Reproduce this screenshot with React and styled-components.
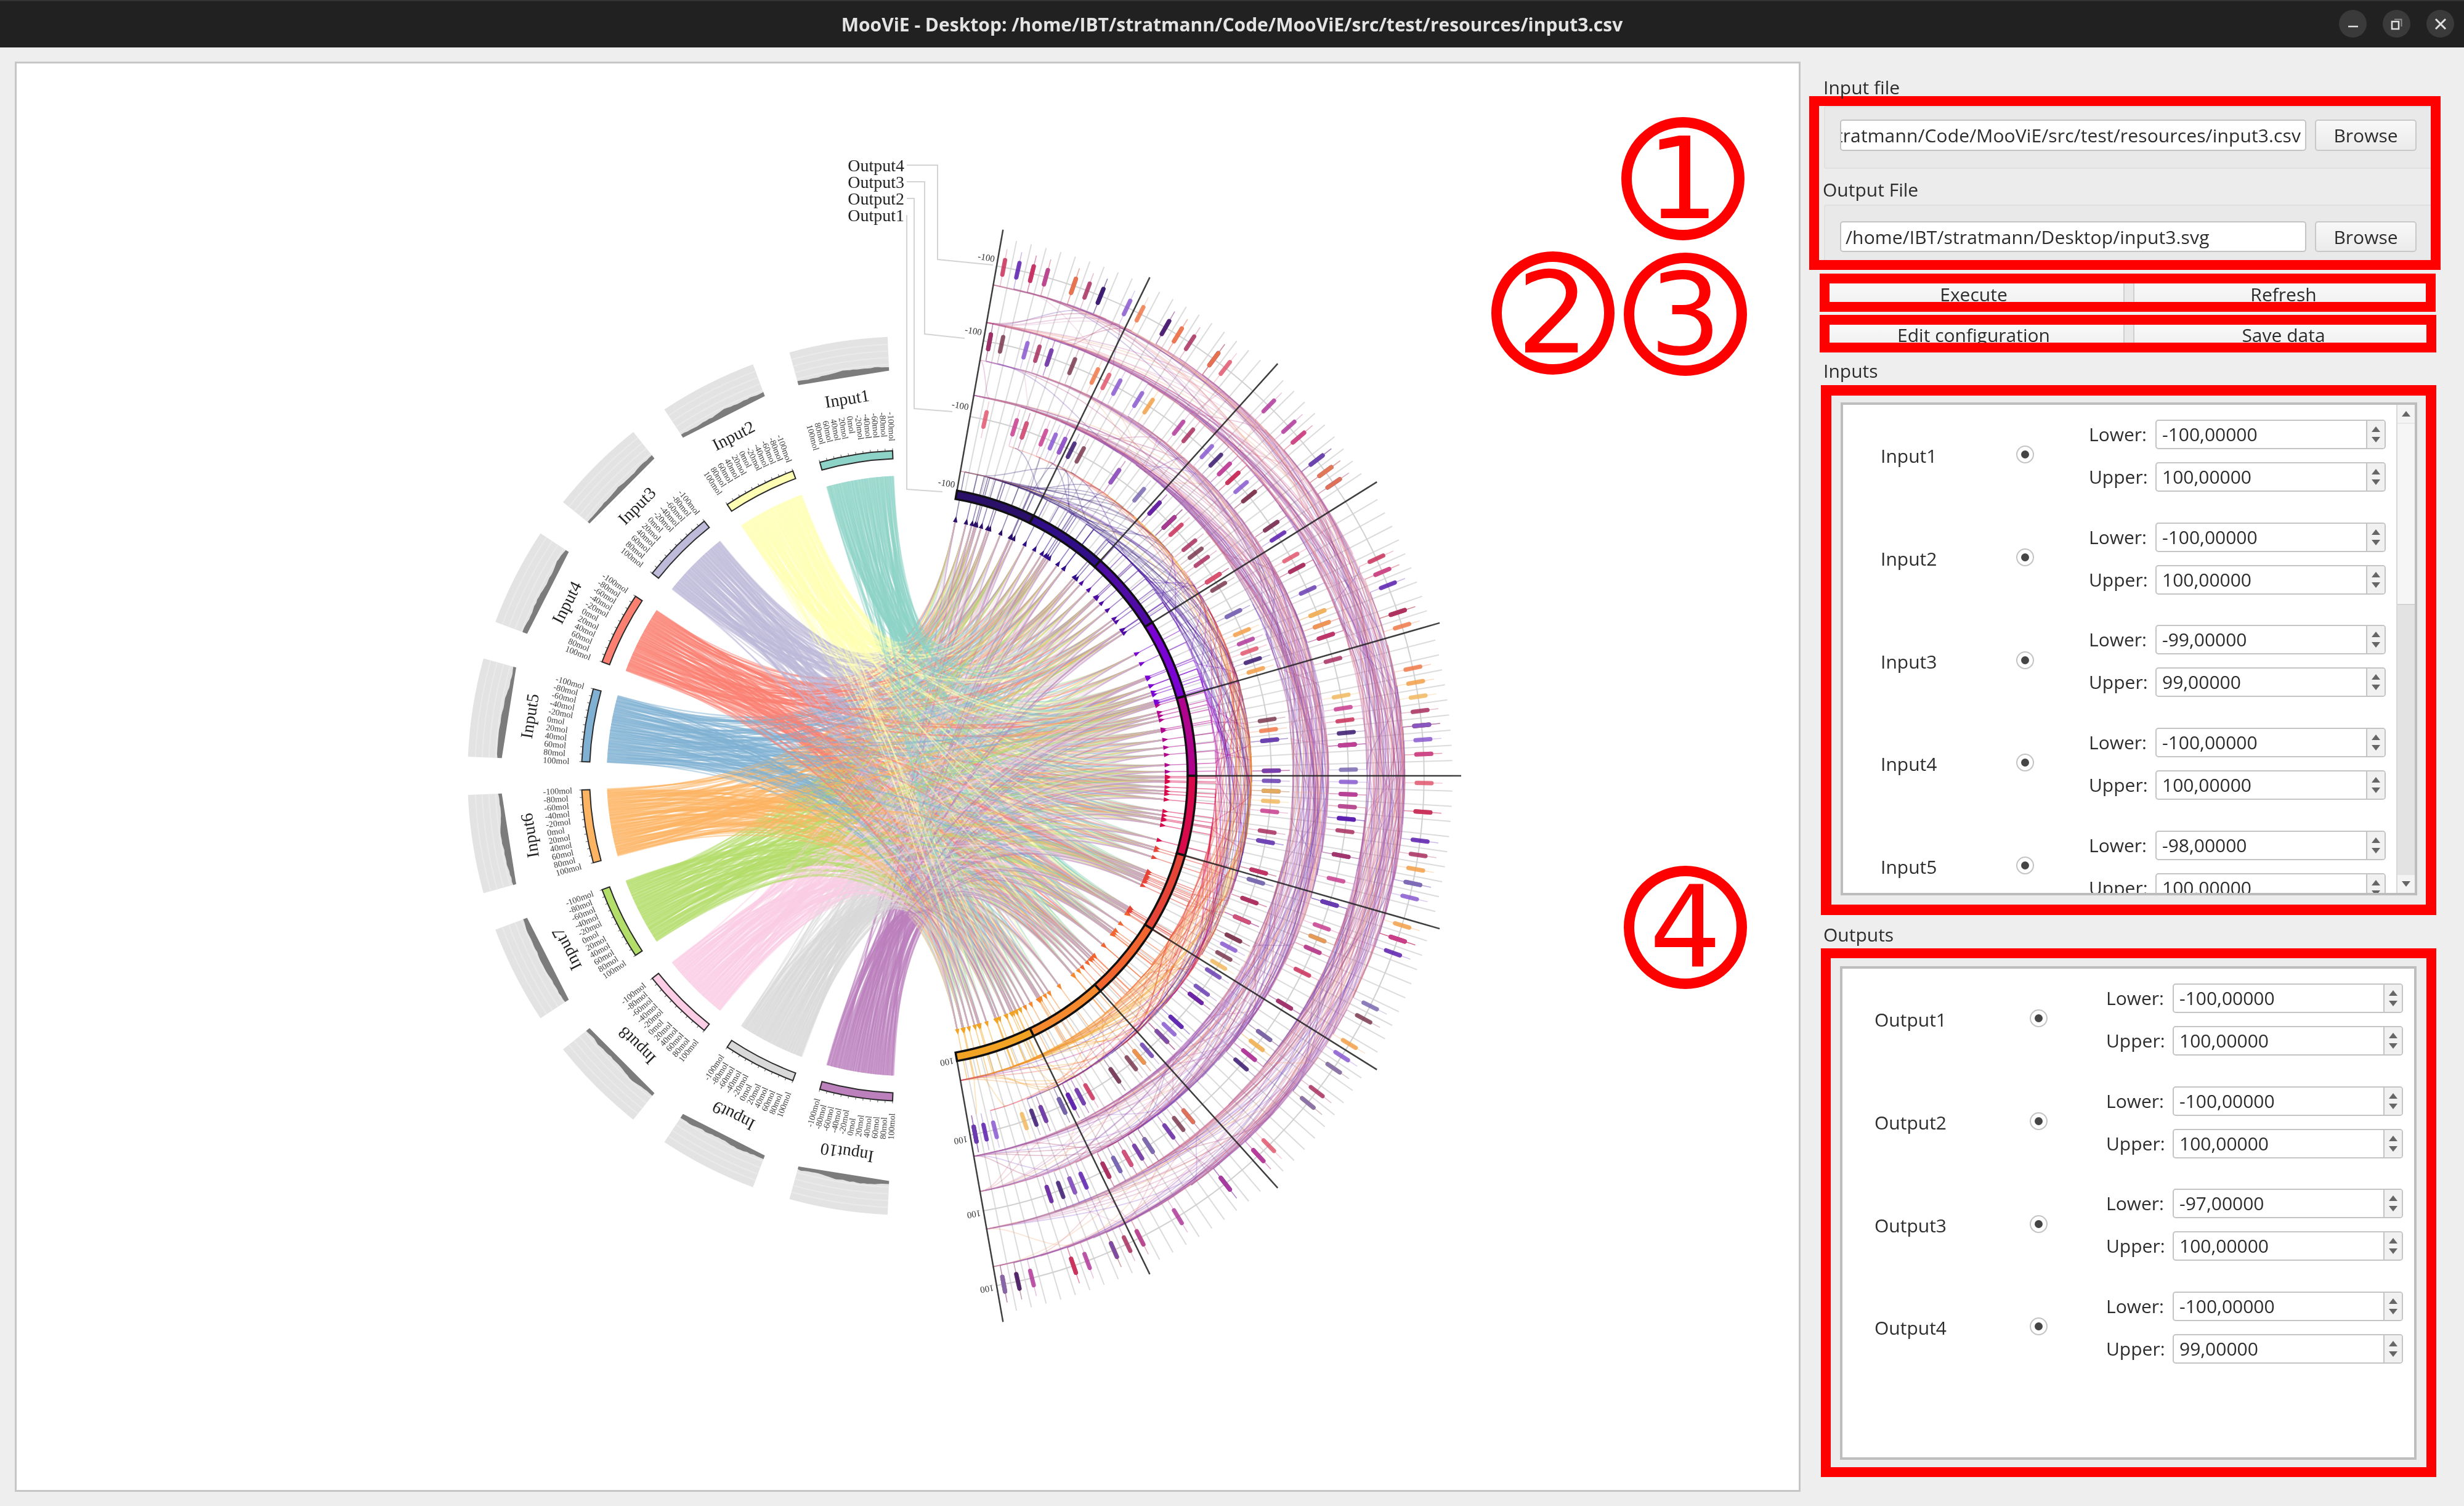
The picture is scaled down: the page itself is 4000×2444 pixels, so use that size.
import React from "react";
import styled, { createGlobalStyle } from "styled-components";

const Global = createGlobalStyle`
  html, body { margin: 0; padding: 0; background: #eeeeee; }
`;

const Root = styled.div`
  position: relative;
  width: 4000px;
  height: 2444px;
  overflow: hidden;
  background: #eeeeee;
  color: #2c2c2c;
  font-family: "Open Sans", "Noto Sans", sans-serif;
  font-size: 30px;
  filter: blur(0.7px);
`;

const TitleBar = styled.div`
  position: relative;
  height: 75px;
  background: #212121;
  border-top: 2px solid #333333;
  display: flex;
  align-items: center;
  justify-content: center;
`;

const WindowTitle = styled.div`
  color: #e4e4e4;
  font-weight: 700;
  font-size: 30px;
`;

const WindowButtons = styled.div`
  position: absolute;
  right: 16px;
  top: 14px;
  display: flex;
  gap: 26px;
`;

const WinButton = styled.div`
  width: 45px;
  height: 45px;
  border-radius: 50%;
  background: #3a3a3a;
  display: flex;
  align-items: center;
  justify-content: center;
`;

const Body = styled.div`
  display: flex;
  padding: 23px 0 0 24px;
`;

const CanvasPanel = styled.div`
  flex: none;
  box-sizing: border-box;
  width: 2899px;
  height: 2321px;
  background: #ffffff;
  border: 3px solid #c6c6c6;
`;

const ChartSvg = styled.svg`
  display: block;
  width: 2893px;
  height: 2315px;
`;

const Side = styled.div`
  flex: none;
  width: 1077px;
  padding-left: 14px;
  box-sizing: border-box;
`;

const SectionLabel = styled.div`
  display: flex;
  align-items: flex-end;
  box-sizing: border-box;
  height: ${(p) => p.$h}px;
  padding: 0 0 ${(p) => p.$pb}px 23px;
  line-height: 24px;
`;

const RedFrame = styled.div`
  box-sizing: border-box;
  margin-left: ${(p) => p.$ml}px;
  margin-top: ${(p) => p.$mt || 0}px;
  width: ${(p) => p.$w}px;
  height: ${(p) => p.$h}px;
  border: ${(p) => p.$b}px solid #ff0000;
  overflow: hidden;
  background: #ececec;
`;

const FileGroup = styled.div`
  box-sizing: border-box;
  height: ${(p) => p.$h}px;
  margin-left: 8px;
  width: 1010px;
  padding: ${(p) => p.$pt}px 0 0 24px;
  background: #e9e9e9;
  border: 2px solid #e0e0e0;
  border-radius: 4px;
`;

const FileRow = styled.div`
  display: flex;
  gap: 14px;
  width: 936px;
  height: ${(p) => p.$h}px;
`;

const LineEdit = styled.div`
  flex: 1;
  min-width: 0;
  box-sizing: border-box;
  display: flex;
  align-items: center;
  justify-content: ${(p) => (p.$clipStart ? "flex-end" : "flex-start")};
  padding: 0 7px;
  overflow: hidden;
  white-space: nowrap;
  background: #ffffff;
  border: 2px solid #c4c4c4;
  border-radius: 5px;
  letter-spacing: 0.12px;
  span { flex: none; }
`;

const BrowseButton = styled.div`
  flex: none;
  width: 165px;
  box-sizing: border-box;
  display: flex;
  align-items: center;
  justify-content: center;
  background: linear-gradient(#f8f8f8, #ebebeb);
  border: 2px solid #c8c8c8;
  border-radius: 5px;
`;

const FileLabel = styled.div`
  height: 58px;
  margin-left: 6px;
  line-height: 68px;
`;

const ActionRow = styled.div`
  display: grid;
  grid-template-columns: 490px 488px;
  column-gap: 14px;
  margin-left: -11px;
  height: 100%;
  background: #e8e8e8;
`;

const ActionButton = styled.div`
  text-align: center;
  line-height: ${(p) => p.$lh}px;
  background: linear-gradient(#f8f8f8, #f1f1f1);
  border: solid #cfcfcf;
  border-width: 0 2px;
`;

const ScrollFrame = styled.div`
  box-sizing: border-box;
  margin: ${(p) => p.$mt}px 0 0 15px;
  width: 936px;
  height: ${(p) => p.$h}px;
  border: 4px solid #bdbdbd;
  background: #ffffff;
  display: flex;
  overflow: hidden;
`;

const RowsView = styled.div`
  flex: 1;
  min-width: 0;
  margin-top: -1px;
`;

const ValueRow = styled.div`
  display: flex;
  align-items: center;
  height: 166.7px;
`;

const RowName = styled.div`
  flex: none;
  box-sizing: border-box;
  width: ${(p) => p.$w}px;
  padding-left: ${(p) => p.$pl}px;
  margin-top: 1px;
`;

const Radio = styled.div`
  flex: none;
  box-sizing: border-box;
  width: 29px;
  height: 29px;
  margin-top: -3px;
  border-radius: 50%;
  background: #ffffff;
  border: 2px solid #c4c4c4;
  display: flex;
  align-items: center;
  justify-content: center;
  &::after {
    content: "";
    width: 13px;
    height: 13px;
    border-radius: 50%;
    background: #454545;
  }
`;

const SpinGrid = styled.div`
  flex: none;
  margin-left: ${(p) => p.$ml}px;
  display: grid;
  grid-template-columns: 108px 374px;
  row-gap: 21px;
  align-items: center;
`;

const BoundLabel = styled.div`
  line-height: 48px;
`;

const Spin = styled.div`
  box-sizing: border-box;
  height: 48px;
  display: flex;
  background: #ffffff;
  border: 2px solid #c4c4c4;
  border-radius: 5px;
  overflow: hidden;
`;

const SpinValue = styled.div`
  flex: 1;
  padding-left: 9px;
  line-height: 44px;
`;

const Stepper = styled.div`
  flex: none;
  width: 28px;
  background: #f1f1f1;
  border-left: 2px solid #c4c4c4;
  display: flex;
  flex-direction: column;
  align-items: center;
  justify-content: center;
  gap: 8px;
`;

const StepArrow = styled.div`
  width: 0;
  height: 0;
  border-left: 7px solid transparent;
  border-right: 7px solid transparent;
  ${(p) => (p.$down ? "border-top: 9px solid #666666;" : "border-bottom: 9px solid #666666;")}
`;

const Scrollbar = styled.div`
  flex: none;
  width: 28px;
  display: flex;
  flex-direction: column;
  background: #e3e3e3;
  border-left: 2px solid #d8d8d8;
`;

const ScrollStep = styled.div`
  flex: none;
  height: 29px;
  background: #f4f4f4;
  display: flex;
  align-items: center;
  justify-content: center;
`;

const ScrollHandle = styled.div`
  flex: none;
  height: 296px;
  background: #f6f6f6;
  border-top: 2px solid #e8e8e8;
  border-bottom: 2px solid #d4d4d4;
  box-sizing: border-box;
`;

const ScrollTrack = styled.div`
  flex: 1;
`;

// the annotation numbers lie over the chart panel
const Marker = styled.div`
  position: absolute;
  left: ${(p) => p.$x - 100}px;
  top: ${(p) => p.$y - 100}px;
  box-sizing: border-box;
  width: 200px;
  height: 200px;
  border: 17px solid #ff0000;
  border-radius: 50%;
  display: flex;
  align-items: center;
  justify-content: center;
  color: #ff0000;
  font-family: "DejaVu Sans", sans-serif;
  font-size: 184px;
  line-height: 1;
`;

// chart geometry, all in page pixels
const CX = 1472;
const CY = 1259;
const INPUT_COLORS = ["#8dd3c7", "#ffffb3", "#bebada", "#fb8072", "#80b1d3", "#fdb462", "#b3de69", "#fccde5", "#d9d9d9", "#bc80bd"];
const SEG_COLORS = ["#2a1068", "#2f0e88", "#4e0ca4", "#7a02d2", "#b0048f", "#d80a4c", "#e64436", "#f2652f", "#f5892e", "#f2a324"];
const BAR_COLORS = ["#6a3fb0", "#8a5ad0", "#5a1fae", "#b03a9a", "#c8408f", "#c9305a", "#e05870", "#ef7a4a", "#f2a04a", "#f0b860", "#7a3a50", "#3a1a70", "#7a6ab0", "#a83060"];
const LINK_COLORS = ["#8a5ad0", "#c060a0", "#e07a8a", "#f0a878", "#6a3fb0", "#b03a70", "#d9a0c0"];
const TICKS = ["-100mol", "-80mol", "-60mol", "-40mol", "-20mol", "0mol", "20mol", "40mol", "60mol", "80mol", "100mol"];
const SAMPLE_COUNT = 130;

const mulberry = (seed) => () => {
  seed |= 0;
  seed = (seed + 0x6d2b79f5) | 0;
  let t = Math.imul(seed ^ (seed >>> 15), 1 | seed);
  t = (t + Math.imul(t ^ (t >>> 7), 61 | t)) ^ t;
  return ((t ^ (t >>> 14)) >>> 0) / 4294967296;
};
const rnd = mulberry(11);
const pick = (list) => list[Math.floor(rnd() * list.length)];

const shuffled = (n) => {
  const list = Array.from({ length: n }, (_, i) => (i + rnd()) / n);
  for (let i = n - 1; i > 0; i--) {
    const j = Math.floor(rnd() * (i + 1));
    [list[i], list[j]] = [list[j], list[i]];
  }
  return list;
};

const pol = (r, a) => {
  const t = (a * Math.PI) / 180;
  return [CX + r * Math.sin(t), CY - r * Math.cos(t)];
};
const pt = (r, a) => pol(r, a).map((n) => n.toFixed(1)).join(" ");
const sector = (r0, r1, a0, a1) => {
  const s = a1 > a0 ? 1 : 0;
  return `M${pt(r1, a0)}A${r1} ${r1} 0 0 ${s} ${pt(r1, a1)}L${pt(r0, a1)}A${r0} ${r0} 0 0 ${1 - s} ${pt(r0, a0)}Z`;
};
const radial = (r0, r1, a) => `M${pt(r0, a)}L${pt(r1, a)}`;
const circleArc = (r, a0, a1) => `M${pt(r, a0)}A${r} ${r} 0 0 1 ${pt(r, a1)}`;
const gridAngle = () => 10 + Math.floor(rnd() * 100) * 1.6 + 0.8;

const segOf = (a) => SEG_COLORS[Math.min(9, Math.max(0, Math.floor((a - 10) / 16)))];

const link = (ra, rb, a0, a1) => {
  let d = "";
  for (let i = 0; i <= 22; i++) {
    const t = i / 22;
    const s = t * t * (3 - 2 * t);
    d += (i ? "L" : "M") + pt(ra + (rb - ra) * s, a0 + (a1 - a0) * t);
  }
  return d;
};

const inputs = INPUT_COLORS.map((color, i) => {
  const a0 = -(2.5 + 18 * i);
  const a1 = a0 - 13;
  let h = 4 + rnd() * 3;
  let hist = `M${pt(658, a0)}`;
  for (let k = 0; k <= 26; k++) {
    h = Math.max(3, Math.min(8, h + (rnd() - 0.5) * 2.4));
    hist += `L${pt(658 + h, a0 - (13 * k) / 26)}`;
  }
  hist += `L${pt(658, a1)}Z`;
  return { name: `Input${i + 1}`, color, a0, a1, hist, starts: shuffled(SAMPLE_COUNT) };
});

const samples = Array.from({ length: SAMPLE_COUNT }, (_, n) => {
  const a = 10.5 + rnd() * 159;
  return {
    a,
    color: segOf(a),
    chords: inputs.map((inp) => {
      const [x0, y0] = pol(487, inp.a0 - inp.starts[n] * 13);
      const [x1, y1] = pol(424, a);
      return `M${x0.toFixed(1)} ${y0.toFixed(1)}Q${CX} ${CY} ${x1.toFixed(1)} ${y1.toFixed(1)}`;
    }),
    bars: [gridAngle(), gridAngle(), gridAngle()],
    barColors: [pick(BAR_COLORS), pick(BAR_COLORS), pick(BAR_COLORS)],
  };
});

const TRACKS = [592, 717, 840];
const AXIS_ANGLES = Array.from({ length: 11 }, (_, i) => 10 + 16 * i);
const GRID_ANGLES = Array.from({ length: 101 }, (_, i) => 10 + 1.6 * i);

const spreadEnd = (a) => {
  const q = rnd();
  if (q < 0.08) return 10;
  if (q < 0.16) return 170;
  return a;
};

const links = samples.flatMap((s, i) => {
  const first = s.a + (s.bars[0] - s.a) * 0.6;
  const own = [
    { d: link(502, 560, s.a, first), color: s.color },
    { d: link(627, 685, spreadEnd(s.bars[0]), s.bars[1]), color: pick(LINK_COLORS) },
    { d: link(747, 809, spreadEnd(s.bars[1]), s.bars[2]), color: pick(LINK_COLORS) },
  ];
  if (i % 2) return own;
  return own.concat([
    { d: link(502, 560, spreadEnd(s.a), gridAngle()), color: s.color },
    { d: link(627, 685, gridAngle(), spreadEnd(gridAngle())), color: pick(LINK_COLORS) },
    { d: link(747, 809, gridAngle(), spreadEnd(gridAngle())), color: pick(LINK_COLORS) },
  ]);
});

// a quarter of the samples draw no bars, so the tracks keep their gaps
const barSamples = samples.filter((_, i) => i % 4 !== 3);

const TOP_LABELS = [479, 607, 730, 851];
const BOTTOM_LABELS = [469, 598, 720, 843];

const LEADERS = [
  { name: "Output4", y: 268, path: "M1472 268H1522V421L1612 430" },
  { name: "Output3", y: 295, path: "M1472 295H1501V542L1566 549" },
  { name: "Output2", y: 322, path: "M1472 322H1484V663L1546 668" },
  { name: "Output1", y: 349, path: "M1472 349V794L1530 798" },
];

const ringLines = [668, 679, 690, 701];

const Chart = () => (
  <ChartSvg viewBox="27 103 2893 2315" fontFamily="'Liberation Serif', serif">
    {inputs.map((inp) => (
      <g key={inp.name}>
        <path d={sector(658, 713, inp.a0, inp.a1)} fill="#e3e3e3" />
        {ringLines.map((r) => (
          <path key={r} d={`M${pt(r, inp.a1)}A${r} ${r} 0 0 1 ${pt(r, inp.a0)}`} fill="none" stroke="#eaeaea" strokeWidth="2" />
        ))}
        <path d={inp.hist} fill="#7c7c7c" />
        <path d={sector(515, 528, inp.a0, inp.a1)} fill={inp.color} stroke="#2a2a2a" strokeWidth="2" />
        {TICKS.map((t, i) => {
          const a = inp.a0 - (13 * i) / 10;
          const [x, y] = pol(591, a);
          return (
            <g key={t}>
              <path d={radial(528, 532, a)} stroke="#333" strokeOpacity=".7" strokeWidth="1.2" />
              <text x={x} y={y} dy=".35em" fontSize="14" fill="#3a3a3a" transform={`rotate(${a + 90} ${x} ${y})`}>
                {t}
              </text>
            </g>
          );
        })}
        {(() => {
          const a = (inp.a0 + inp.a1) / 2;
          const [x, y] = pol(620, a);
          return (
            <text x={x} y={y} dy=".35em" fontSize="28" fill="#222" textAnchor="middle" transform={`rotate(${a} ${x} ${y})`}>
              {inp.name}
            </text>
          );
        })()}
      </g>
    ))}

    {GRID_ANGLES.map((a) => (
      <path key={a} d={radial(470, 886, a)} stroke="#000" strokeOpacity=".14" strokeWidth="2" />
    ))}
    {TRACKS.map((r) => (
      <path key={r} d={circleArc(r, 10, 170)} fill="none" stroke="#d0d0d0" strokeWidth="2" />
    ))}

    <g fill="none" strokeWidth="2.3" strokeOpacity=".5">
      {samples.flatMap((s, i) =>
        s.chords.map((d, k) => <path key={`${i}-${k}`} d={d} stroke={INPUT_COLORS[k]} />)
      )}
    </g>

    {samples.map((s, i) => {
      const [x0, y0] = pol(419, s.a - 0.5);
      const [x1, y1] = pol(419, s.a + 0.5);
      const [x2, y2] = pol(429, s.a);
      return (
        <g key={i}>
          <path d={`M${x0} ${y0}L${x1} ${y1}L${x2} ${y2}Z`} fill={s.color} />
          <path d={radial(428, 456, s.a)} stroke={s.color} strokeOpacity=".5" strokeWidth="1.6" />
          <path d={radial(470, 502, s.a)} stroke={s.color} strokeOpacity=".5" strokeWidth="1.6" />
        </g>
      );
    })}

    <g fill="none" strokeWidth="1.7" strokeOpacity=".3">
      {links.map((l, i) => (
        <path key={i} d={l.d} stroke={l.color} />
      ))}
    </g>

    {barSamples.flatMap((s, i) =>
      s.bars.map((a, k) => (
        <g key={`${i}-${k}`}>
          <path d={radial(TRACKS[k] - 31, TRACKS[k] + 30, a)} stroke={s.barColors[k]} strokeOpacity=".3" strokeWidth="1.5" />
          <path d={radial(TRACKS[k] - 12, TRACKS[k] + 12, a)} stroke={s.barColors[k]} strokeOpacity=".85" strokeWidth="7" strokeLinecap="round" />
        </g>
      ))
    )}

    {AXIS_ANGLES.map((a) => (
      <path key={a} d={radial(470, 900, a)} stroke="#222" strokeOpacity=".85" strokeWidth="2.5" />
    ))}
    {SEG_COLORS.map((c, i) => (
      <path key={c} d={sector(456, 470, 10 + 16 * i, 26 + 16 * i)} fill={c} stroke="#111" strokeWidth="3.5" />
    ))}

    {TOP_LABELS.map((r) => {
      const [x, y] = pol(r, 10);
      return (
        <text key={r} x={x - 5} y={y} dy=".35em" fontSize="15" fill="#333" textAnchor="end" transform={`rotate(10 ${x} ${y})`}>
          -100
        </text>
      );
    })}
    {BOTTOM_LABELS.map((r) => {
      const [x, y] = pol(r, 170);
      return (
        <text key={r} x={x + 5} y={y} dy=".35em" fontSize="15" fill="#333" transform={`rotate(170 ${x} ${y})`}>
          100
        </text>
      );
    })}

    {LEADERS.map((l) => (
      <g key={l.name}>
        <path d={l.path} fill="none" stroke="#d4d4d4" strokeWidth="2" />
        <text x="1468" y={l.y} dy=".35em" fontSize="28" fill="#222" textAnchor="end">
          {l.name}
        </text>
      </g>
    ))}
  </ChartSvg>
);

const SpinBox = ({ value }) => (
  <Spin>
    <SpinValue>{value}</SpinValue>
    <Stepper>
      <StepArrow />
      <StepArrow $down />
    </Stepper>
  </Spin>
);

const BoundsRow = ({ name, lower, upper, nameWidth, namePad, gridLeft }) => (
  <ValueRow>
    <RowName $w={nameWidth} $pl={namePad}>{name}</RowName>
    <Radio />
    <SpinGrid $ml={gridLeft}>
      <BoundLabel>Lower:</BoundLabel>
      <SpinBox value={lower} />
      <BoundLabel>Upper:</BoundLabel>
      <SpinBox value={upper} />
    </SpinGrid>
  </ValueRow>
);

const INPUT_ROWS = [
  ["Input1", "-100,00000", "100,00000"],
  ["Input2", "-100,00000", "100,00000"],
  ["Input3", "-99,00000", "99,00000"],
  ["Input4", "-100,00000", "100,00000"],
  ["Input5", "-98,00000", "100,00000"],
];

const OUTPUT_ROWS = [
  ["Output1", "-100,00000", "100,00000"],
  ["Output2", "-100,00000", "100,00000"],
  ["Output3", "-97,00000", "100,00000"],
  ["Output4", "-100,00000", "99,00000"],
];

export default function App() {
  return (
    <Root>
      <Global />
      <TitleBar>
        <WindowTitle>MooViE - Desktop: /home/IBT/stratmann/Code/MooViE/src/test/resources/input3.csv</WindowTitle>
        <WindowButtons>
          <WinButton>
            <svg width="18" height="18" viewBox="0 0 18 18"><path d="M1 13H17" stroke="#e0e0e0" strokeWidth="2.5" /></svg>
          </WinButton>
          <WinButton>
            <svg width="20" height="20" viewBox="0 0 20 20" fill="none">
              <path d="M6 2.5H17.5V14" stroke="#8c8c8c" strokeWidth="2" />
              <rect x="2" y="6" width="11" height="12" stroke="#e0e0e0" strokeWidth="2.5" />
            </svg>
          </WinButton>
          <WinButton>
            <svg width="20" height="20" viewBox="0 0 20 20"><path d="M2 2L18 18M18 2L2 18" stroke="#e0e0e0" strokeWidth="3" /></svg>
          </WinButton>
        </WindowButtons>
      </TitleBar>
      <Body>
        <CanvasPanel>
          <Chart />
        </CanvasPanel>
        <Side>
          <SectionLabel $h={56} $pb={2}>Input file</SectionLabel>
          <RedFrame $ml={0} $w={1025} $h={282} $b={16}>
            <FileGroup $h={102} $pt={20}>
              <FileRow $h={51}>
                <LineEdit $clipStart>
                  <span>/home/IBT/stratmann/Code/MooViE/src/test/resources/input3.csv</span>
                </LineEdit>
                <BrowseButton>Browse</BrowseButton>
              </FileRow>
            </FileGroup>
            <FileLabel>Output File</FileLabel>
            <FileGroup $h={120} $pt={25}>
              <FileRow $h={50}>
                <LineEdit><span>/home/IBT/stratmann/Desktop/input3.svg</span></LineEdit>
                <BrowseButton>Browse</BrowseButton>
              </FileRow>
            </FileGroup>
          </RedFrame>
          <RedFrame $ml={17} $mt={6} $w={1000} $h={62} $b={16}>
            <ActionRow>
              <ActionButton $lh={36}>Execute</ActionButton>
              <ActionButton $lh={36}>Refresh</ActionButton>
            </ActionRow>
          </RedFrame>
          <RedFrame $ml={17} $mt={5} $w={1001} $h={61} $b={16}>
            <ActionRow>
              <ActionButton $lh={34}>Edit configuration</ActionButton>
              <ActionButton $lh={34}>Save data</ActionButton>
            </ActionRow>
          </RedFrame>
          <SectionLabel $h={53} $pb={11}>Inputs</SectionLabel>
          <RedFrame $ml={19} $w={999} $h={860} $b={17}>
            <ScrollFrame $mt={11} $h={800}>
              <RowsView>
                {INPUT_ROWS.map(([name, lower, upper]) => (
                  <BoundsRow key={name} name={name} lower={lower} upper={upper} nameWidth={281} namePad={61} gridLeft={89} />
                ))}
              </RowsView>
              <Scrollbar>
                <ScrollStep><StepArrow /></ScrollStep>
                <ScrollHandle />
                <ScrollTrack />
                <ScrollStep><StepArrow $down /></ScrollStep>
              </Scrollbar>
            </ScrollFrame>
          </RedFrame>
          <SectionLabel $h={54} $pb={10}>Outputs</SectionLabel>
          <RedFrame $ml={19} $w={999} $h={858} $b={16}>
            <ScrollFrame $mt={13} $h={801}>
              <RowsView>
                {OUTPUT_ROWS.map(([name, lower, upper]) => (
                  <BoundsRow key={name} name={name} lower={lower} upper={upper} nameWidth={304} namePad={52} gridLeft={95} />
                ))}
              </RowsView>
            </ScrollFrame>
          </RedFrame>
        </Side>
      </Body>
      <Marker $x={2732} $y={290}>1</Marker>
      <Marker $x={2521} $y={508}>2</Marker>
      <Marker $x={2736} $y={510}>3</Marker>
      <Marker $x={2736} $y={1505}>4</Marker>
    </Root>
  );
}
